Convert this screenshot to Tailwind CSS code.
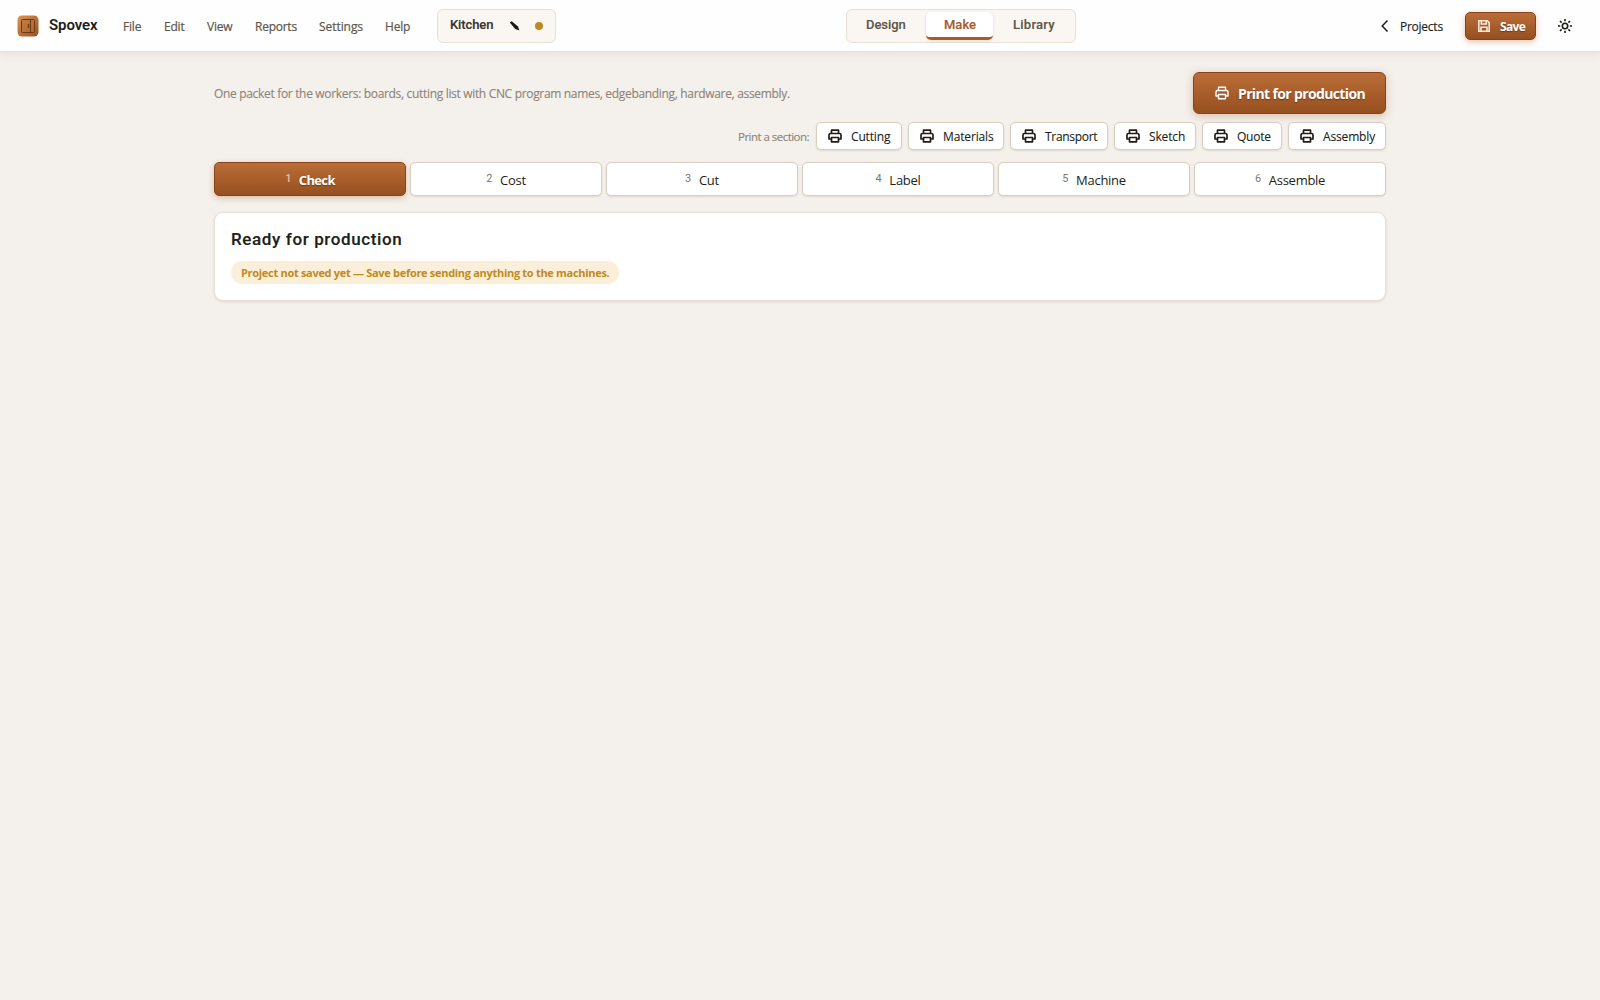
<!DOCTYPE html>
<html lang="en">
<head>
<meta charset="utf-8">
<title>Spovex</title>
<script src="https://cdn.jsdelivr.net/npm/@tailwindcss/browser@4"></script>
</head>
<body class="min-h-screen bg-[#f4f0eb] font-['Open_Sans',sans-serif] text-[12px] leading-4 text-[#211e19]">
<svg class="hidden">
  <symbol id="printer" viewBox="0 0 14 14"><g fill="none" stroke="currentColor" stroke-linejoin="round"><path d="M3.5 4.5V1.2h7v3.3M3.2 10H1V6q0-1.5 1.500-1.500h9q1.500 0 1.500 1.500v4h-2.200"/><path d="M3.500 8.500h7v4.300h-7z"/></g></symbol>
</svg>

<header class="flex h-[52px] items-center border-b border-[#e3ded6] bg-[#fefefe] pl-[17px] shadow-[0_2px_10px_rgba(70,50,30,0.08)]">
  <svg class="size-[22px] shrink-0" viewBox="0 0 22 22">
    <defs><linearGradient id="wood" x1="0" y1="0" x2="1" y2="1"><stop offset="0" stop-color="#dc9555"/><stop offset="1" stop-color="#96501c"/></linearGradient></defs>
    <rect x=".5" y=".5" width="21" height="21" rx="4.500" fill="url(#wood)"/>
    <g fill="none" stroke="#6b3a14" stroke-width="1"><rect x="4.500" y="4.500" width="13" height="13" rx="1" fill="#b86f35" fill-opacity=".5"/><path d="M13.500 4.500v13"/><path d="M11.500 9v4" stroke-width="1.400"/></g>
  </svg>
  <span class="ml-[10px] w-[74px] -mt-[2px] font-[Roboto,sans-serif] text-[15px] font-semibold tracking-[-0.1px]">Spovex</span>
  <nav class="mt-[3px] flex font-medium text-[#5d564b] [-webkit-text-stroke:0.2px]">
    <a class="w-[41px] tracking-[-0.2px]">File</a>
    <a class="w-[43px] tracking-[-0.2px]">Edit</a>
    <a class="w-[48px] tracking-[-0.2px]">View</a>
    <a class="w-[64px] tracking-[-0.25px]">Reports</a>
    <a class="w-[66px] tracking-[-0.06px]">Settings</a>
    <a class="w-[52px] tracking-[-0.2px]">Help</a>
  </nav>
  <div class="flex h-[34px] w-[119px] shrink-0 items-center rounded-[6px] border border-[#e6e0d5] bg-[#faf7f2] pl-3">
    <span class="w-[58px] -mt-px font-[Roboto,sans-serif] text-[13px] font-medium tracking-[-0.1px] text-[#38332c] [-webkit-text-stroke:0.15px]">Kitchen</span>
    <svg class="mt-px ml-px h-[11px] w-[12px]" viewBox="0 0 12 11"><path d="M.8 1.500 2.700.3 9 5.500l1.400 4.100L6.200 8z" fill="#1c1915"/></svg>
    <span class="ml-[14px] size-2 rounded-full bg-[#c08a1e]"></span>
  </div>
  <div class="ml-[290px] flex h-[34px] w-[230px] shrink-0 rounded-[6px] border border-[#e6e0d5] bg-[#faf7f2] p-[2px] font-[Roboto,sans-serif] text-[13px] font-medium leading-[26px] text-[#5d564b] [-webkit-text-stroke:0.15px]">
    <span class="w-[77px] pl-[17px] tracking-[-0.05px]">Design</span>
    <span class="h-[28px] w-[67px] rounded-[5px] border-b-[3px] border-[#a85b28] bg-white pl-[18px] text-[#a85b28] shadow-[0_1px_3px_rgba(70,50,30,0.15)]">Make</span>
    <span class="pl-[20px] tracking-[0.25px]">Library</span>
  </div>
  <svg class="ml-[304px] h-3 w-[9px] shrink-0" viewBox="0 0 9 12"><path d="M7.500.5 2.200 6l5.300 5.500" fill="none" stroke="#211e19" stroke-width="1.500"/></svg>
  <span class="mt-[3px] ml-[11px] w-[65px] tracking-[-0.25px] [-webkit-text-stroke:0.15px]">Projects</span>
  <button class="flex h-[28px] w-[71px] shrink-0 items-center rounded-[5px] border border-[#86431a] bg-linear-to-b from-[#bb6d38] to-[#96501f] pl-[12px] text-white shadow-[0_2px_6px_rgba(168,91,40,0.35)]">
    <svg class="size-[12px]" viewBox="0 0 12 12" fill="none" stroke="#f8e9de" stroke-width="1.600"><path d="M.8.800h8.500l1.900 1.900v8.500H.8z"/><path d="M3.300.800v3.200h5V.800M3 11V7.300h6V11"/></svg>
    <span class="ml-[10px] mt-[3px] font-bold tracking-[-0.65px] [text-shadow:0_1px_1px_rgba(60,25,5,0.5)]">Save</span>
  </button>
  <svg class="ml-[22px] size-[14px] shrink-0" viewBox="0 0 14 14" fill="none" stroke="#211e19" stroke-width="1.600"><circle cx="7" cy="7" r="2.700"/><path d="M7 0v2.200M7 11.800V14M0 7h2.200M11.800 7H14M2 2l1.600 1.600M10.400 10.400 12 12M2 12l1.600-1.600M10.400 3.600 12 2"/></svg>
</header>

<main class="mx-auto w-[1172px] pt-5">
  <div class="flex h-[42px] items-center justify-between">
    <p class="mt-[2px] tracking-[-0.325px] text-[#8b8375] [-webkit-text-stroke:0.1px]">One packet for the workers: boards, cutting list with CNC program names, edgebanding, hardware, assembly.</p>
    <button class="flex h-[42px] w-[193px] items-center rounded-[6px] border border-[#86431a] bg-linear-to-b from-[#bb6d38] to-[#96501f] pl-[21px] text-[14px] font-bold text-white shadow-[0_2px_8px_rgba(168,91,40,0.35)]">
      <svg class="-mt-px size-[14px]"><use href="#printer" stroke-width="1.400"/></svg>
      <span class="ml-[9px] mt-[2px] tracking-[-0.64px] whitespace-nowrap [text-shadow:0_1px_1px_rgba(60,25,5,0.5)]">Print for production</span>
    </button>
  </div>

  <div class="mt-2 flex h-[28px] items-center justify-end gap-[6px] [-webkit-text-stroke:0.1px]">
    <span class="mt-[2px] w-[72px] text-[11.5px] whitespace-nowrap tracking-[-0.53px] text-[#8b8375]">Print a section:</span>
    <button class="flex h-[28px] w-[86px] items-center gap-[9px] rounded-[5px] border border-[#d8cfc0] bg-white pl-[11px] tracking-[-0.15px] shadow-[0_1px_2px_rgba(70,50,30,0.12)]"><svg class="-mt-px size-[14px]"><use href="#printer" stroke-width="1.700"/></svg><span class="mt-[2px]">Cutting</span></button>
    <button class="flex h-[28px] w-[96px] items-center gap-[9px] rounded-[5px] border border-[#d8cfc0] bg-white pl-[11px] tracking-[-0.15px] shadow-[0_1px_2px_rgba(70,50,30,0.12)]"><svg class="-mt-px size-[14px]"><use href="#printer" stroke-width="1.700"/></svg><span class="mt-[2px]">Materials</span></button>
    <button class="flex h-[28px] w-[98px] items-center gap-[9px] rounded-[5px] border border-[#d8cfc0] bg-white pl-[11px] tracking-[-0.3px] shadow-[0_1px_2px_rgba(70,50,30,0.12)]"><svg class="-mt-px size-[14px]"><use href="#printer" stroke-width="1.700"/></svg><span class="mt-[2px]">Transport</span></button>
    <button class="flex h-[28px] w-[82px] items-center gap-[9px] rounded-[5px] border border-[#d8cfc0] bg-white pl-[11px] tracking-[-0.15px] shadow-[0_1px_2px_rgba(70,50,30,0.12)]"><svg class="-mt-px size-[14px]"><use href="#printer" stroke-width="1.700"/></svg><span class="mt-[2px]">Sketch</span></button>
    <button class="flex h-[28px] w-[80px] items-center gap-[9px] rounded-[5px] border border-[#d8cfc0] bg-white pl-[11px] tracking-[-0.25px] shadow-[0_1px_2px_rgba(70,50,30,0.12)]"><svg class="-mt-px size-[14px]"><use href="#printer" stroke-width="1.700"/></svg><span class="mt-[2px]">Quote</span></button>
    <button class="flex h-[28px] w-[98px] items-center gap-[9px] rounded-[5px] border border-[#d8cfc0] bg-white pl-[11px] tracking-[-0.15px] shadow-[0_1px_2px_rgba(70,50,30,0.12)]"><svg class="-mt-px size-[14px]"><use href="#printer" stroke-width="1.700"/></svg><span class="mt-[2px]">Assembly</span></button>
  </div>

  <div class="mt-3 grid grid-cols-6 gap-1 text-[13px] tracking-[-0.27px]">
    <button class="flex h-[34px] items-center justify-center gap-2 rounded-[5px] border border-[#86431a] bg-linear-to-b from-[#bb6d38] to-[#96501f] font-bold tracking-[-0.65px] text-white shadow-[0_2px_6px_rgba(168,91,40,0.35)]"><span class="font-[Roboto,sans-serif] text-[11px] font-medium text-[#e5c0a5]">1</span><span class="mt-px [text-shadow:0_1px_1px_rgba(60,25,5,0.5)]">Check</span></button>
    <button class="flex h-[34px] items-center justify-center gap-2 rounded-[5px] border border-[#d8cfc0] bg-white shadow-[0_1px_2px_rgba(70,50,30,0.12)]"><span class="font-[Roboto,sans-serif] text-[11px] text-[#7d776d]">2</span><span class="mt-px">Cost</span></button>
    <button class="flex h-[34px] items-center justify-center gap-2 rounded-[5px] border border-[#d8cfc0] bg-white shadow-[0_1px_2px_rgba(70,50,30,0.12)]"><span class="font-[Roboto,sans-serif] text-[11px] text-[#7d776d]">3</span><span class="mt-px">Cut</span></button>
    <button class="flex h-[34px] items-center justify-center gap-2 rounded-[5px] border border-[#d8cfc0] bg-white shadow-[0_1px_2px_rgba(70,50,30,0.12)]"><span class="font-[Roboto,sans-serif] text-[11px] text-[#7d776d]">4</span><span class="mt-px">Label</span></button>
    <button class="flex h-[34px] items-center justify-center gap-2 rounded-[5px] border border-[#d8cfc0] bg-white shadow-[0_1px_2px_rgba(70,50,30,0.12)]"><span class="font-[Roboto,sans-serif] text-[11px] text-[#7d776d]">5</span><span class="mt-px">Machine</span></button>
    <button class="flex h-[34px] items-center justify-center gap-2 rounded-[5px] border border-[#d8cfc0] bg-white shadow-[0_1px_2px_rgba(70,50,30,0.12)]"><span class="font-[Roboto,sans-serif] text-[11px] text-[#7d776d]">6</span><span class="mt-px">Assemble</span></button>
  </div>

  <section class="mt-4 h-[89px] rounded-[9px] border border-[#e6e0d5] bg-white px-4 pt-4 shadow-[0_1px_3px_rgba(70,50,30,0.12)]">
    <h2 class="font-[Roboto,sans-serif] text-[17px] font-medium leading-5 tracking-[0.62px] [-webkit-text-stroke:0.15px]">Ready for production</h2>
    <div class="mt-3 flex h-[23px] w-[388px] items-center rounded-full bg-[#fbefd9] pl-[10px] text-[11px] font-bold whitespace-nowrap text-[#c08a1e]"><span class="tracking-[-0.3px]">Project not saved yet — Save before sending anything to the machines.</span></div>
  </section>
</main>
</body>
</html>
